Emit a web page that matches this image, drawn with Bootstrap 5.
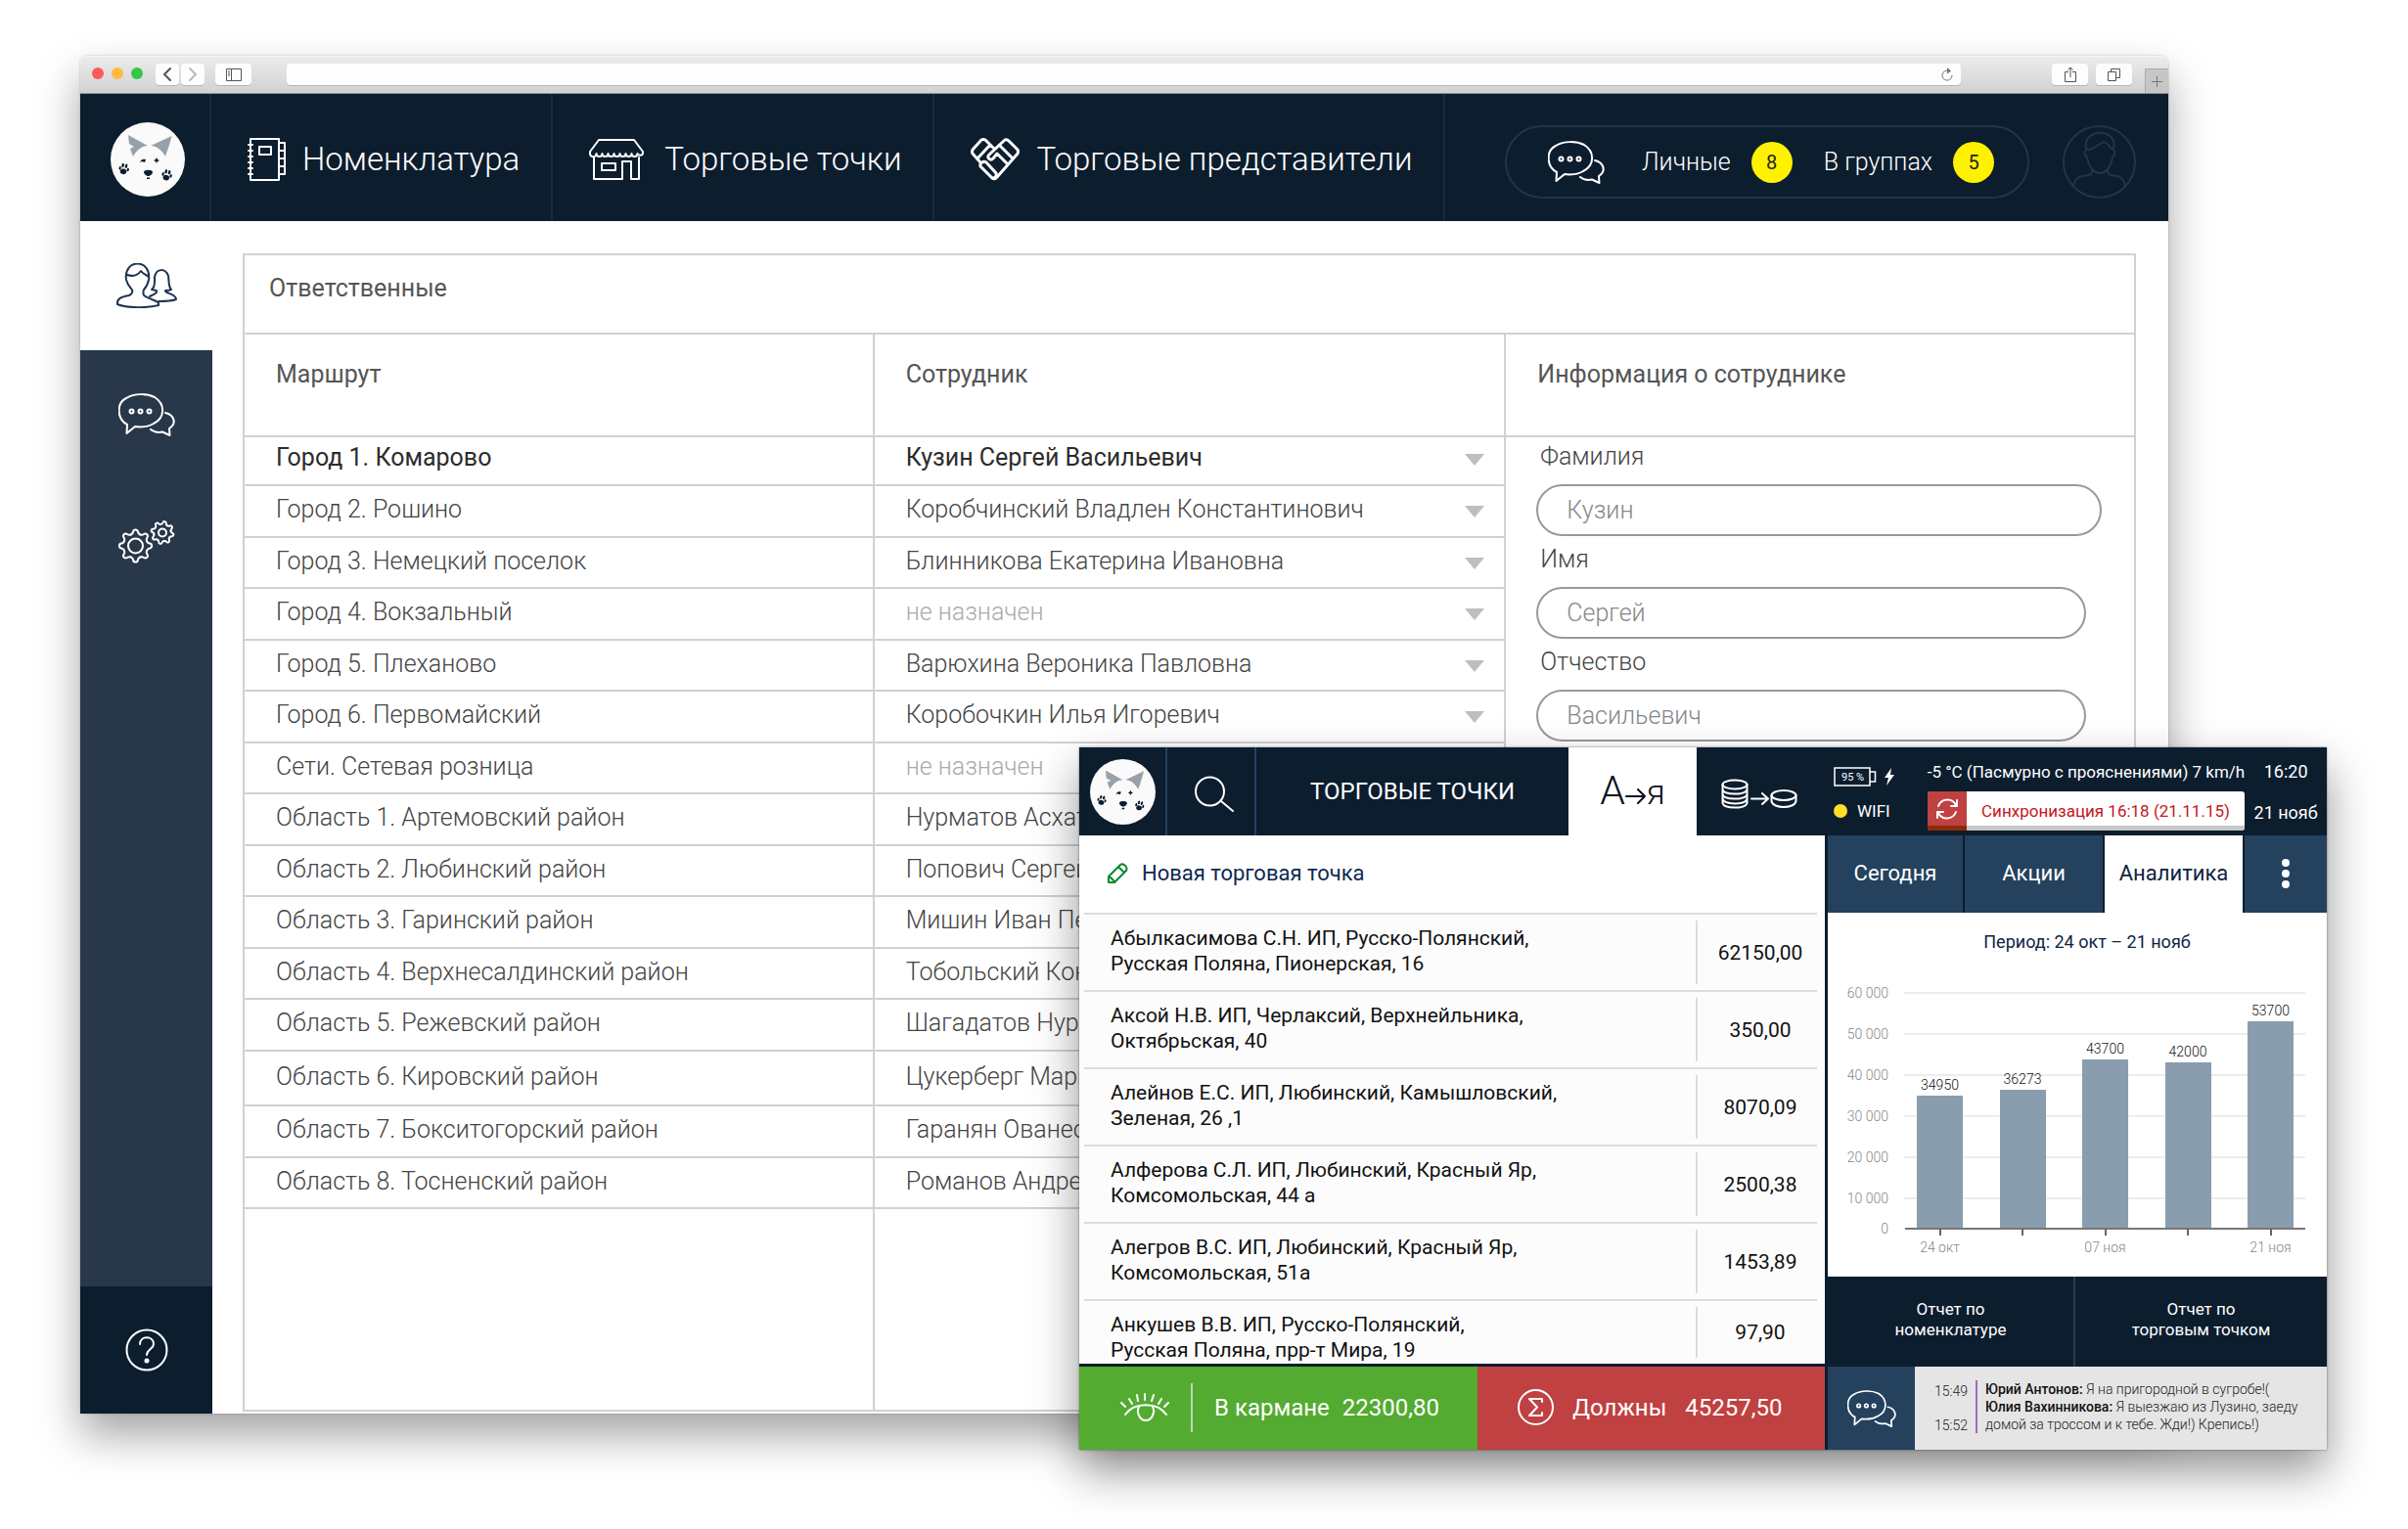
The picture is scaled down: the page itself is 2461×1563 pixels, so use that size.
<!DOCTYPE html>
<html lang="ru">
<head>
<meta charset="utf-8">
<meta name="viewport" content="width=device-width, initial-scale=1">
<title>Ответственные</title>
<link href="https://cdn.jsdelivr.net/npm/bootstrap@5.3.0/dist/css/bootstrap.min.css" rel="stylesheet">
<style>
:root{--navy:#0c1d2e;--slate:#283749;--steel:#24415e;--rule:#d0d1d1;--bar:#899daf}
body{font-family:Roboto,"Liberation Sans",sans-serif;font-weight:300;font-size:25px;line-height:32px;color:#444;background:#fff;min-height:100vh;padding:57px 245px 118px 82px}
svg{flex:none;display:block}
.ln{fill:none;stroke:currentColor;stroke-width:2;stroke-linecap:round;stroke-linejoin:round}
.ln-thick{stroke-width:3}
a{color:inherit;text-decoration:none}
button{font:inherit;color:inherit;border:0;background:none;padding:0}
/* browser window */
.win{box-shadow:0 22px 44px rgba(0,0,0,.36),0 0 2px rgba(0,0,0,.3);border-radius:8px 8px 0 0;background:#fff}
.chrome{height:39px;padding:7px 0 0 12px;background:linear-gradient(#ebebeb,#d2d2d2);border-bottom:1px solid #8b929a;border-radius:8px 8px 0 0;border-top:1px solid #f6f6f6}
.light{width:12px;height:12px;border-radius:50%;margin:4px 8px 0 0}
.tool{height:22px;width:24px;background:#fdfdfd;border-radius:4px;box-shadow:0 1px 0 #b5b5b5;color:#555}
.tool-wide{width:37px}
.tool-back{margin:0 2px 0 5px}
.tool-side{margin-left:11px}
.address{height:22px;margin:0 93px 0 36px;background:#fdfdfd;border-radius:4px;box-shadow:0 1px 0 #b5b5b5}
.address input{border:0;background:none;outline:0;font-size:14px;line-height:20px;height:22px}
.newtab{width:24px;height:25px;margin:5px 0 0 13px;border:1px solid #aaa;border-width:1px 0 0 1px;background:#c6c6c6;color:#777}
.topbar{height:130px;background:var(--navy);color:#fff}
.topbar .logo-cell{width:134px;padding:4px 0 0 6px;border-right:2px solid #182a3d}
.topbar .sect{font-size:33px;line-height:40px;gap:17px;padding:3px 32px 0 37px;border-right:2px solid #182a3d;white-space:nowrap}
.user-zone{padding:8px 33px 0 0;gap:34px}
.inbox{height:75px;border:2px solid #22344a;border-radius:38px;padding:2px 34px 0 42px;white-space:nowrap}
.inbox a{gap:21px;margin-left:32px}
.inbox svg+a{margin-left:38px}
.count{width:42px;height:42px;border-radius:50%;background:#fff200;color:#222;font-size:20px;font-weight:400}
.rail{width:135px;background:var(--slate);color:#fff}
.rail .cell{height:132px;width:135px}
.rail .now{background:#fff;color:#1f3350}
.rail .help{background:var(--navy);height:130px}
.main-area{padding:33px 33px 2px 31px}
.panel{border:2px solid var(--rule)}
.panel h1{font-size:25px;line-height:32px;font-weight:400;height:81px;padding:18px 0 0 25px;margin:0;border-bottom:2px solid var(--rule);color:#555}
.two-thirds{width:66.666%}
.routes{table-layout:fixed;border-collapse:separate;border-spacing:0}
.routes th{height:105px;vertical-align:top;padding:25px 0 0 32px;font-weight:400;color:#555;border-bottom:2px solid var(--rule)}
.routes td{height:53px;padding:0 20px 3px 32px;vertical-align:middle;border-bottom:2px solid var(--rule);white-space:nowrap}
.routes tbody tr:nth-child(odd) td{height:52px}
.routes tbody tr:first-child td{height:50px;padding-bottom:6px;font-weight:400;color:#2c2c2c}
.routes tbody tr.tall td{height:56px}
.routes th:first-child,.routes td:first-child,.tail-col{border-right:2px solid var(--rule)}
.pick{display:grid;align-items:center}
.pick>*{grid-area:1/1}
.pick select{appearance:none;border:0;background:none;font:inherit;color:inherit;padding:0;height:32px;width:100%;outline:0}
.pick .none{color:#a9abad}
.pick i{justify-self:end;pointer-events:none;border:solid transparent;border-width:12px 10px 0;border-top-color:#bcbec0;margin-top:4px}
.person{border-left:2px solid var(--rule)}
.person h2{font-size:25px;line-height:32px;font-weight:400;color:#555;height:105px;padding:25px 0 0 32px;margin:0;border-bottom:2px solid var(--rule)}
.person form{padding:4px 49px 0 31px}
.person label{display:block;padding-left:4px;margin-bottom:12px}
.person input{display:block;height:53px;width:100%;border:2px solid #97999c;border-radius:27px;padding:0 29px;margin-bottom:8px;background:#fff;color:#85888b;font:inherit;outline:0}
.person .wide{width:calc(100% + 16px)}
/* tablet screen over the window */
.tablet{position:absolute;left:1103px;right:83px;top:764px;background:var(--navy);box-shadow:0 22px 44px rgba(0,0,0,.42),0 0 2px rgba(0,0,0,.5);font-size:22px;line-height:26px;font-weight:400;color:#fff}
.tablet header{height:90px}
.part-l{flex:0 0 60%;min-width:0}
.part-r{flex:0 0 40%;min-width:0}
.tablet .t-logo{width:90px;border-right:2px solid #24425f}
.tablet .t-find{width:91px;border-right:2px solid #24425f;padding:6px 0 0 6px}
.tablet .t-title{font-size:24px}
.tablet .t-az{width:131px;background:#fff;color:#0c1020;font-weight:300}
.az-big{font-size:41px;line-height:48px}
.az-small{font-size:35px;line-height:48px}
.tablet .t-coins{width:134px;padding:4px 6px 0 0}
.status{font-size:17px;line-height:20px;white-space:nowrap}
.st-a{width:102px;padding:20px 0 0 6px;gap:15px}
.st-b{padding-top:15px;gap:10px}
.st-c{width:84px;padding-top:15px;gap:22px;font-size:18px}
.dot{width:14px;height:14px;border-radius:50%;background:#ffdf2b;margin-right:10px}
.sync{height:40px;border-radius:3px;overflow:hidden;background:#fff;color:#c4181c}
.sync .s-ico{width:40px;background:#bf4141;color:#fff;border-bottom:5px solid #8c2c0c}
.sync .s-txt{border-bottom:5px solid #c8c8c8;padding-top:5px}
.sheet{height:540px;margin:0 3px 3px 0;background:#fcfcfc;color:#111}
.add{height:79px;padding:0 0 2px 29px;gap:14px;background:#fff;color:#0e2a50;font-size:22px}
.shops{width:calc(100% - 13px);margin:0 8px 0 5px;border-collapse:separate;border-spacing:0;font-size:21px}
.shops td{height:79px;border-top:2px solid #dcdcdc;padding:0}
.shops tr:last-child td{height:66px}
.shops td:first-child{padding:11px 0 0 27px;vertical-align:top}
.shops td:last-child{width:124px;padding-left:8px;text-align:center;background:linear-gradient(#dcdcdc,#dcdcdc) no-repeat left center/2px calc(100% - 12px)}
.money{height:85px;margin-right:3px;padding:0;font-size:24px;white-space:nowrap}
.money>div{padding-bottom:2px}
.m-in{flex:0 0 407px;background:#54ab31;padding-left:42px}
.m-in .bar-v{width:2px;height:50px;background:#b9deaa;margin:0 22px}
.m-in .bar-v+span{margin-right:13px}
.m-out{background:#bf4141;padding-left:41px;gap:19px}
.tabs button{flex:0 0 140px;height:79px;background:var(--steel);border-right:2px solid var(--navy);padding-bottom:2px}
.tabs .wider{flex-basis:143px}
.tabs .on{background:#fff;color:#0e2344}
.tabs .more{flex:1;border:0}
.report{height:372px;background:#fff;color:#0e2344;padding-top:18px}
.report h3{font-size:18px;line-height:24px;font-weight:400;margin:0 0 19px;padding-left:20px;text-align:center}
.plot{display:grid;padding-right:22px;font-size:14px;line-height:18px;font-weight:300}
.plot>*{grid-area:1/1}
.step{height:42px;color:#888}
.step span{width:62px;text-align:right;margin-right:16px}
.step::after{content:"";flex:1;height:2px;background:#ededed}
.step.zero{height:20px}
.bars,.ticks{margin-left:78px;padding:0 12px 0 13px}
.bars{padding-bottom:11px;color:#112}
.bars>div{width:47px;text-align:center}
.bars i{display:block;background:var(--bar);margin-top:2px}
.axis{align-self:end;height:2px;margin:0 0 9px 79px;background:#777}
.ticks{margin-top:-10px;margin-right:22px;font-size:14px;line-height:18px;font-weight:300;color:#888}
.ticks span{width:47px;text-align:center;white-space:nowrap}
.ticks span::before{content:"";display:block;width:2px;height:7px;margin:0 auto 3px;background:#666}
.links a{flex:1;height:92px;font-size:17px;line-height:21px;text-align:center;padding-bottom:4px}
.links a:first-child{flex:0 0 253px;border-right:2px solid #2a3b4e}
.talk{height:85px;background:#e5e5e5;color:#222;font-size:14px;line-height:18px;font-weight:300}
.talk .t-ico{width:89px;background:var(--steel);color:#fff}
.talk b{font-weight:500;color:#111}
.when{padding:16px 8px 16px 20px}
.what{border-left:2px solid #9a6bbf;padding-left:8px;margin:14px 0 17px}
</style>
</head>
<body class="d-flex flex-column position-relative">
<svg width="0" height="0" class="position-absolute" aria-hidden="true">
<defs>
<symbol id="paw" viewBox="0 0 12 14"><ellipse cx="6" cy="10" rx="3.6" ry="3"/><ellipse cx="1.6" cy="7" rx="1.3" ry="2"/><ellipse cx="4.2" cy="3.4" rx="1.4" ry="2.4"/><ellipse cx="8" cy="3.4" rx="1.4" ry="2.4"/><ellipse cx="10.6" cy="7" rx="1.3" ry="2"/></symbol>
<symbol id="husky" viewBox="0 0 76 76"><circle cx="38" cy="38" r="38" fill="#fafafa"/><path fill="#98a1a9" d="M18 13 38 24C32 24 27 28 23 35L20 27 24 25 19 22ZM62.500 14 41 24C47 24 52 28 56 35 58 29 60 24 62.500 14Z"/><g fill="#0c1d2e"><path d="M30 41C31 38 33 37 36 38L35 41 32 40ZM44 39 46 38 47 36 48 38 50 39 48 40 47 42 46 40Z"/><path d="M34 51C34 48 43 48 43 51 43 53 40 55 38.500 55 37 55 34 53 34 51ZM37 56.500H40V58H37Z"/><use href="#paw" x="8" y="41" width="11" height="13" transform="rotate(12 13 48)"/><use href="#paw" x="52" y="47" width="11" height="14" transform="rotate(14 58 54)"/></g></symbol>
<symbol id="chat" viewBox="0 0 58 44"><g class="ln"><path d="M9 32C-2 26-2 10 8 5 16 0 29 0 37 4 48 11 48 25 36 31 31 34 24 35 17 34L8.500 41Z"/><path d="M48 20C57 22 60 31 52 36L52.500 43 45 39.500C40 40.500 36 39.500 33 37"/><circle cx="13.500" cy="18.500" r="2"/><circle cx="22.500" cy="18.500" r="2"/><circle cx="31.500" cy="18.500" r="2"/></g></symbol>
<path id="tooth" vector-effect="non-scaling-stroke" d="M-4.800-11.500C-3.300-12.100-2.600-13-2.400-14.500-2-17.300 2-17.300 2.400-14.500 2.600-13 3.300-12.100 4.800-11.500"/>
<g id="cog"><use href="#tooth"/><use href="#tooth" transform="rotate(45)"/><use href="#tooth" transform="rotate(90)"/><use href="#tooth" transform="rotate(135)"/><use href="#tooth" transform="rotate(180)"/><use href="#tooth" transform="rotate(225)"/><use href="#tooth" transform="rotate(270)"/><use href="#tooth" transform="rotate(315)"/></g>
</defs>
</svg>

<div class="win flex-grow-1 d-flex flex-column">
  <div class="chrome d-flex align-items-start">
    <span class="light" style="background:#fc5b57"></span><span class="light" style="background:#fdbc40"></span><span class="light" style="background:#33c748"></span>
    <button class="tool tool-back d-flex align-items-center justify-content-center" aria-label="Назад"><svg width="8" height="14" viewBox="0 0 8 14" class="ln"><path d="M7 1 1 7l6 6"/></svg></button>
    <button class="tool d-flex align-items-center justify-content-center" aria-label="Вперёд"><svg width="8" height="14" viewBox="0 0 8 14" class="ln" color="#bbb"><path d="m1 1 6 6-6 6"/></svg></button>
    <button class="tool tool-wide tool-side d-flex align-items-center justify-content-center" aria-label="Боковая панель"><svg width="16" height="13" viewBox="0 0 16 13" fill="none" stroke="#555"><path d="M.5.5h15v12H.5zM5.500.5v12M2 3h2M2 5h2M2 7h2"/></svg></button>
    <div class="address flex-grow-1 d-flex align-items-center px-2"><input type="text" class="flex-grow-1" aria-label="Адрес"><svg width="12" height="14" viewBox="0 0 12 14" fill="none" stroke="#777"><path d="M8 3.500A5 5 0 1 0 11 8"/><path d="M6 .5 9.500 3.500 6 6" fill="#777"/></svg></div>
    <button class="tool tool-wide d-flex align-items-center justify-content-center me-2" aria-label="Поделиться"><svg width="12" height="16" viewBox="0 0 12 16" fill="none" stroke="#555"><path d="M4 5.500H.5v10h11v-10H8M6 11V1M3.500 3.500 6 1l2.500 2.500"/></svg></button>
    <button class="tool tool-wide d-flex align-items-center justify-content-center" aria-label="Вкладки"><svg width="13" height="13" viewBox="0 0 13 13" fill="none" stroke="#555"><path d="M.5 3.500h8v9h-8zM3.500 3.500v-3h9v9h-4"/></svg></button>
    <button class="newtab d-flex align-items-center justify-content-center" aria-label="Новая вкладка"><svg width="11" height="11" viewBox="0 0 11 11" stroke="#777"><path d="M5.500 0v11M0 5.500h11"/></svg></button>
  </div>

  <nav class="topbar d-flex align-items-stretch">
    <a href="#" class="logo-cell d-flex align-items-center justify-content-center" aria-label="Главная"><svg width="76" height="76"><use href="#husky"/></svg></a>
    <a href="#" class="sect d-flex align-items-center"><svg width="39" height="44" viewBox="0 0 39 44" class="ln"><path d="M3 1H32V43H3ZM32 5H38V37H32M32 13H38M32 21H38M32 29H38M12 9H24V17H12ZM1 7H5M1 13H5M1 19H5M1 25H5M1 31H5M1 37H5"/></svg>Номенклатура</a>
    <a href="#" class="sect d-flex align-items-center"><svg width="60" height="44" viewBox="0 0 60 44" class="ln"><path d="M10 2H46L55 14V16A3 3 0 0 1 49.500 16 3 3 0 0 1 43.500 16 3 3 0 0 1 37.500 16 3 3 0 0 1 31.500 16 3 3 0 0 1 25.500 16 3 3 0 0 1 19.500 16 3 3 0 0 1 13.500 16 3 3 0 0 1 7.500 16 3 3 0 0 1 1 16V14ZM5 20V42H34V24H43V42H51V20M13 26H27V33H13Z"/></svg>Торговые точки</a>
    <a href="#" class="sect d-flex align-items-center"><svg width="50" height="44" viewBox="0 0 50 44" class="ln ln-thick"><path d="M24 11 15 2Q13 1 11 2L2 12Q1 14 2 16L10 25M20 7 7 21M35 2 19 17C16 20 20 24 23 21L27 16 38 27M35 2Q37 1 39 3L48 12Q49 14 48 16L27 40Q25 43 22 41M30 8 42 20"/><path d="M10 29C9 26 13 23 16 25L26 36C27 39 24 43 21 40Z"/></svg>Торговые представители</a>
    <div class="user-zone ms-auto d-flex align-items-center">
      <div class="inbox d-flex align-items-center"><svg width="58" height="44"><use href="#chat"/></svg>
        <a href="#" class="d-flex align-items-center">Личные <span class="count d-flex align-items-center justify-content-center">8</span></a>
        <a href="#" class="d-flex align-items-center">В группах <span class="count d-flex align-items-center justify-content-center">5</span></a>
      </div>
      <a href="#" aria-label="Профиль"><svg width="75" height="75" viewBox="0 0 75 75" class="ln" color="#22344a"><circle cx="37.500" cy="37.500" r="36.500"/><path d="M24 25C19 2 58 2 52 25C55 29 52 32 51 33C49 43 44 49 38 49C32 49 27 43 25 33C23 31 21 29 24 25C34 25 36 18 43 17C47 18 48 24 52 25M30 46C31 52 25 51 20 52C13 54 12 58 11 62M46 46C45 52 51 51 56 52C62 54 63 58 64 62"/></svg></a>
    </div>
  </nav>

  <div class="d-flex flex-grow-1">
    <aside class="rail d-flex flex-column">
      <a href="#" class="cell now d-flex align-items-center justify-content-center" aria-label="Сотрудники"><svg width="62" height="46" viewBox="0 0 62 46" class="ln"><path d="M10 17C7 -5 36 -5 33 17C32 22 31 24 28 27C26 34 29 34 36 37C42 39 44 41 43 43C32 46 10 46 1 42C0 36 6 34 13 33C17 31 17 28 15 26C12 23 11 21 10 17ZM11 12C17 14 22 12 25 8C27 11 31 12 33 14"/><path d="M36 27C40 24 39 19 39 14C41 5 50 5 53 13C54 20 53 24 56 27C54 28 52 28 50 28C49 31 61 31 61 37C56 39 50 39 43 39M36 27 41 28C42 30 39 32 34 34"/></svg></a>
      <a href="#" class="cell d-flex align-items-center justify-content-center" aria-label="Сообщения"><svg width="58" height="44"><use href="#chat"/></svg></a>
      <a href="#" class="cell d-flex align-items-center justify-content-center pb-1" aria-label="Настройки"><svg width="60" height="44" viewBox="0 0 60 44" class="ln"><circle cx="18.500" cy="26" r="7.500"/><use href="#cog" transform="translate(18.500 26)"/><circle cx="46" cy="12.500" r="4"/><use href="#cog" transform="translate(46 12.500) rotate(12) scale(.7)"/></svg></a>
      <a href="#" class="cell help mt-auto d-flex align-items-center justify-content-center" aria-label="Помощь"><svg width="44" height="44" viewBox="0 0 44 44" class="ln"><circle cx="22" cy="22" r="20.500"/><path d="M15 16C15 7 29 7 29 16C29 21 22 21 22 27"/><circle cx="22" cy="33" r="1.500" fill="#fff"/></svg></a>
    </aside>
    <main class="main-area flex-grow-1 d-flex">
      <section class="panel flex-grow-1 d-flex flex-column">
        <h1>Ответственные</h1>
        <div class="d-flex flex-grow-1">
          <div class="two-thirds d-flex flex-column">
            <table class="routes w-100">
              <thead><tr><th>Маршрут</th><th>Сотрудник</th></tr></thead>
              <tbody id="routes"></tbody>
            </table>
            <div class="flex-grow-1 d-flex"><div class="w-50 tail-col"></div></div>
          </div>
          <div class="person flex-grow-1">
            <h2>Информация о сотруднике</h2>
            <form>
              <label for="fam">Фамилия</label><input id="fam" type="text" class="wide" value="Кузин">
              <label for="nam">Имя</label><input id="nam" type="text" value="Сергей">
              <label for="otc">Отчество</label><input id="otc" type="text" value="Васильевич">
            </form>
          </div>
        </div>
      </section>
    </main>
  </div>
</div>

<div class="tablet">
  <header class="d-flex">
    <div class="part-l d-flex">
      <a href="#" class="t-logo d-flex align-items-center justify-content-center" aria-label="Главная"><svg width="67" height="67"><use href="#husky"/></svg></a>
      <button class="t-find d-flex align-items-center justify-content-center" aria-label="Поиск"><svg width="42" height="38" viewBox="0 0 42 38" class="ln"><circle cx="16.500" cy="16" r="14.500"/><path d="M28 26 40 36"/></svg></button>
      <div class="t-title flex-grow-1 d-flex align-items-center justify-content-center">ТОРГОВЫЕ ТОЧКИ</div>
      <button class="t-az d-flex align-items-center justify-content-center"><span class="d-flex align-items-baseline"><span class="az-big">А</span><svg width="22" height="16" viewBox="0 0 22 16" class="ln"><path d="M1 8H20M13 1 20 8 13 15"/></svg><span class="az-small">я</span></span></button>
      <button class="t-coins d-flex align-items-center justify-content-center" aria-label="По сумме"><svg width="78" height="31" viewBox="0 0 78 31" class="ln"><ellipse cx="14" cy="6" rx="12.500" ry="4.500"/><path d="M1.500 6V25C3 31 25 31 26.500 25V6M1.500 11C3 17 25 17 26.500 11M1.500 16C3 22 25 22 26.500 16M1.500 20.500C3 27 25 27 26.500 20.500M31 20.500H47M42 15 48 20.500 42 26"/><ellipse cx="64" cy="17" rx="12.500" ry="5"/><path d="M51.500 17V23C53 31 75 31 76.500 23V17"/></svg></button>
    </div>
    <div class="part-r status d-flex">
      <div class="st-a d-flex flex-column">
        <div class="d-flex align-items-center gap-2"><svg width="44" height="20" viewBox="0 0 44 20" fill="none" stroke="#fff" stroke-width="1.500"><path d="M1 1H37V19H1ZM37 5H42.500V15H37"/><text x="8" y="14" font-size="11" fill="#fff" stroke="none" font-family="Roboto">95 %</text></svg><svg width="10" height="18" viewBox="0 0 10 18" fill="#fff"><path d="M7 0 0 10H4L2 18 10 7H6Z"/></svg></div>
        <div class="d-flex align-items-center"><span class="dot"></span>WIFI</div>
      </div>
      <div class="st-b flex-grow-1 d-flex flex-column">
        <div class="text-center">-5 °C (Пасмурно с прояснениями) 7 km/h</div>
        <button class="sync d-flex"><span class="s-ico d-flex align-items-center justify-content-center"><svg width="24" height="24" viewBox="0 0 24 24" class="ln"><path d="M3 9C6 1 17 0 21 8M22 3V9H16M21 15C18 23 7 24 3 16M2 21V15H8"/></svg></span><span class="s-txt flex-grow-1 d-flex align-items-center justify-content-center">Синхронизация 16:18 (21.11.15)</span></button>
      </div>
      <div class="st-c d-flex flex-column text-center"><div>16:20</div><div>21 нояб</div></div>
    </div>
  </header>
  <div class="d-flex">
    <div class="part-l">
      <div class="sheet">
        <a href="#" class="add d-flex align-items-center"><svg width="21" height="21" viewBox="0 0 21 21" class="ln" color="#0d8a2e"><path d="M1 20V14L13 2C16 0 21 4 19 8L7 20ZM11 4 17 10M2 14 7 19"/></svg>Новая торговая точка</a>
        <table class="shops"><tbody>
          <tr><td>Абылкасимова С.Н. ИП, Русско-Полянский,<br>Русская Поляна, Пионерская, 16</td><td>62150,00</td></tr>
          <tr><td>Аксой Н.В. ИП, Черлаксий, Верхнейльника,<br>Октябрьская, 40</td><td>350,00</td></tr>
          <tr><td>Алейнов Е.С. ИП, Любинский, Камышловский,<br>Зеленая, 26 ,1</td><td>8070,09</td></tr>
          <tr><td>Алферова С.Л. ИП, Любинский, Красный Яр,<br>Комсомольская, 44 а</td><td>2500,38</td></tr>
          <tr><td>Алегров В.С. ИП, Любинский, Красный Яр,<br>Комсомольская, 51а</td><td>1453,89</td></tr>
          <tr><td>Анкушев В.В. ИП, Русско-Полянский,<br>Русская Поляна, прр-т Мира, 19</td><td>97,90</td></tr>
        </tbody></table>
      </div>
      <div class="money d-flex">
        <div class="m-in d-flex align-items-center"><svg width="50" height="30" viewBox="0 0 50 30" class="ln"><path d="M5 22C14 9 38 9 47 22M1 10 5 14M9 6 12 11M17 2 18 8M25 1V7M34 2 32 8M42 6 39 11M49 10 45 14"/><path d="M19 14C16 20 20 28 26 28 32 28 36 20 33 14"/></svg><span class="bar-v"></span><span>В кармане</span><span>22300,80</span></div>
        <div class="m-out flex-grow-1 d-flex align-items-center"><svg width="37" height="37" viewBox="0 0 37 37" class="ln"><circle cx="18.500" cy="18.500" r="17.500"/><path d="M25 13V10H12L20 18.500 12 27H25V24"/></svg><span>Должны</span><span>45257,50</span></div>
      </div>
    </div>
    <div class="part-r">
      <div class="tabs d-flex">
        <button>Сегодня</button><button class="wider">Акции</button><button class="wider on">Аналитика</button><button class="more d-flex align-items-center justify-content-center" aria-label="Ещё"><svg width="8" height="30" viewBox="0 0 8 30" fill="#fff"><circle cx="4" cy="4" r="4"/><circle cx="4" cy="15" r="4"/><circle cx="4" cy="26" r="4"/></svg></button>
      </div>
      <div class="report">
        <h3>Период: 24 окт – 21 нояб</h3>
        <div class="plot">
          <div>
            <div class="step d-flex align-items-center"><span>60 000</span></div>
            <div class="step d-flex align-items-center"><span>50 000</span></div>
            <div class="step d-flex align-items-center"><span>40 000</span></div>
            <div class="step d-flex align-items-center"><span>30 000</span></div>
            <div class="step d-flex align-items-center"><span>20 000</span></div>
            <div class="step d-flex align-items-center"><span>10 000</span></div>
            <div class="step zero d-flex align-items-center"><span>0</span></div>
          </div>
          <div class="bars d-flex justify-content-between align-items-end">
            <div>34950<i style="height:135px"></i></div><div>36273<i style="height:141px"></i></div><div>43700<i style="height:172px"></i></div><div>42000<i style="height:169px"></i></div><div>53700<i style="height:211px"></i></div>
          </div>
          <div class="axis"></div>
        </div>
        <div class="ticks d-flex justify-content-between"><span>24 окт</span><span></span><span>07 ноя</span><span></span><span>21 ноя</span></div>
      </div>
      <div class="links d-flex">
        <a href="#" class="d-flex align-items-center justify-content-center">Отчет по<br>номенклатуре</a>
        <a href="#" class="d-flex align-items-center justify-content-center">Отчет по<br>торговым точком</a>
      </div>
      <div class="talk d-flex">
        <a href="#" class="t-ico d-flex align-items-center justify-content-center" aria-label="Чат"><svg width="50" height="38"><use href="#chat"/></svg></a>
        <div class="when d-flex flex-column justify-content-between"><span>15:49</span><span>15:52</span></div>
        <div class="what flex-grow-1"><b>Юрий Антонов:</b> Я на пригородной в сугробе!(<br><b>Юлия Вахинникова:</b> Я выезжаю из Лузино, заеду<br>домой за троссом и к тебе. Жди!) Крепись!)</div>
      </div>
    </div>
  </div>
</div>

<script src="https://cdn.jsdelivr.net/npm/bootstrap@5.3.0/dist/js/bootstrap.bundle.min.js"></script>
<script>
const rows=[["Город 1. Комарово","Кузин Сергей Васильевич"],["Город 2. Рошино","Коробчинский Владлен Константинович"],["Город 3. Немецкий поселок","Блинникова Екатерина Ивановна"],["Город 4. Вокзальный","не назначен"],["Город 5. Плеханово","Варюхина Вероника Павловна"],["Город 6. Первомайский","Коробочкин Илья Игоревич"],["Сети. Сетевая розница","не назначен"],["Область 1. Артемовский район","Нурматов Асхат"],["Область 2. Любинский район","Попович Сергей"],["Область 3. Гаринский район","Мишин Иван Петрович"],["Область 4. Верхнесалдинский район","Тобольский Константин"],["Область 5. Режевский район","Шагадатов Нурлан"],["Область 6. Кировский район","Цукерберг Марк"],["Область 7. Бокситогорский район","Гаранян Ованес"],["Область 8. Тосненский район","Романов Андрей"]];
document.getElementById("routes").innerHTML=rows.map(([route,who],n)=>`<tr${n===12?' class="tall"':''}><td>${route}</td><td><div class="pick"><select aria-label="${route}"${who==="не назначен"?' class="none"':''}><option>${who}</option></select><i></i></div></td></tr>`).join("");
</script>
</body>
</html>
